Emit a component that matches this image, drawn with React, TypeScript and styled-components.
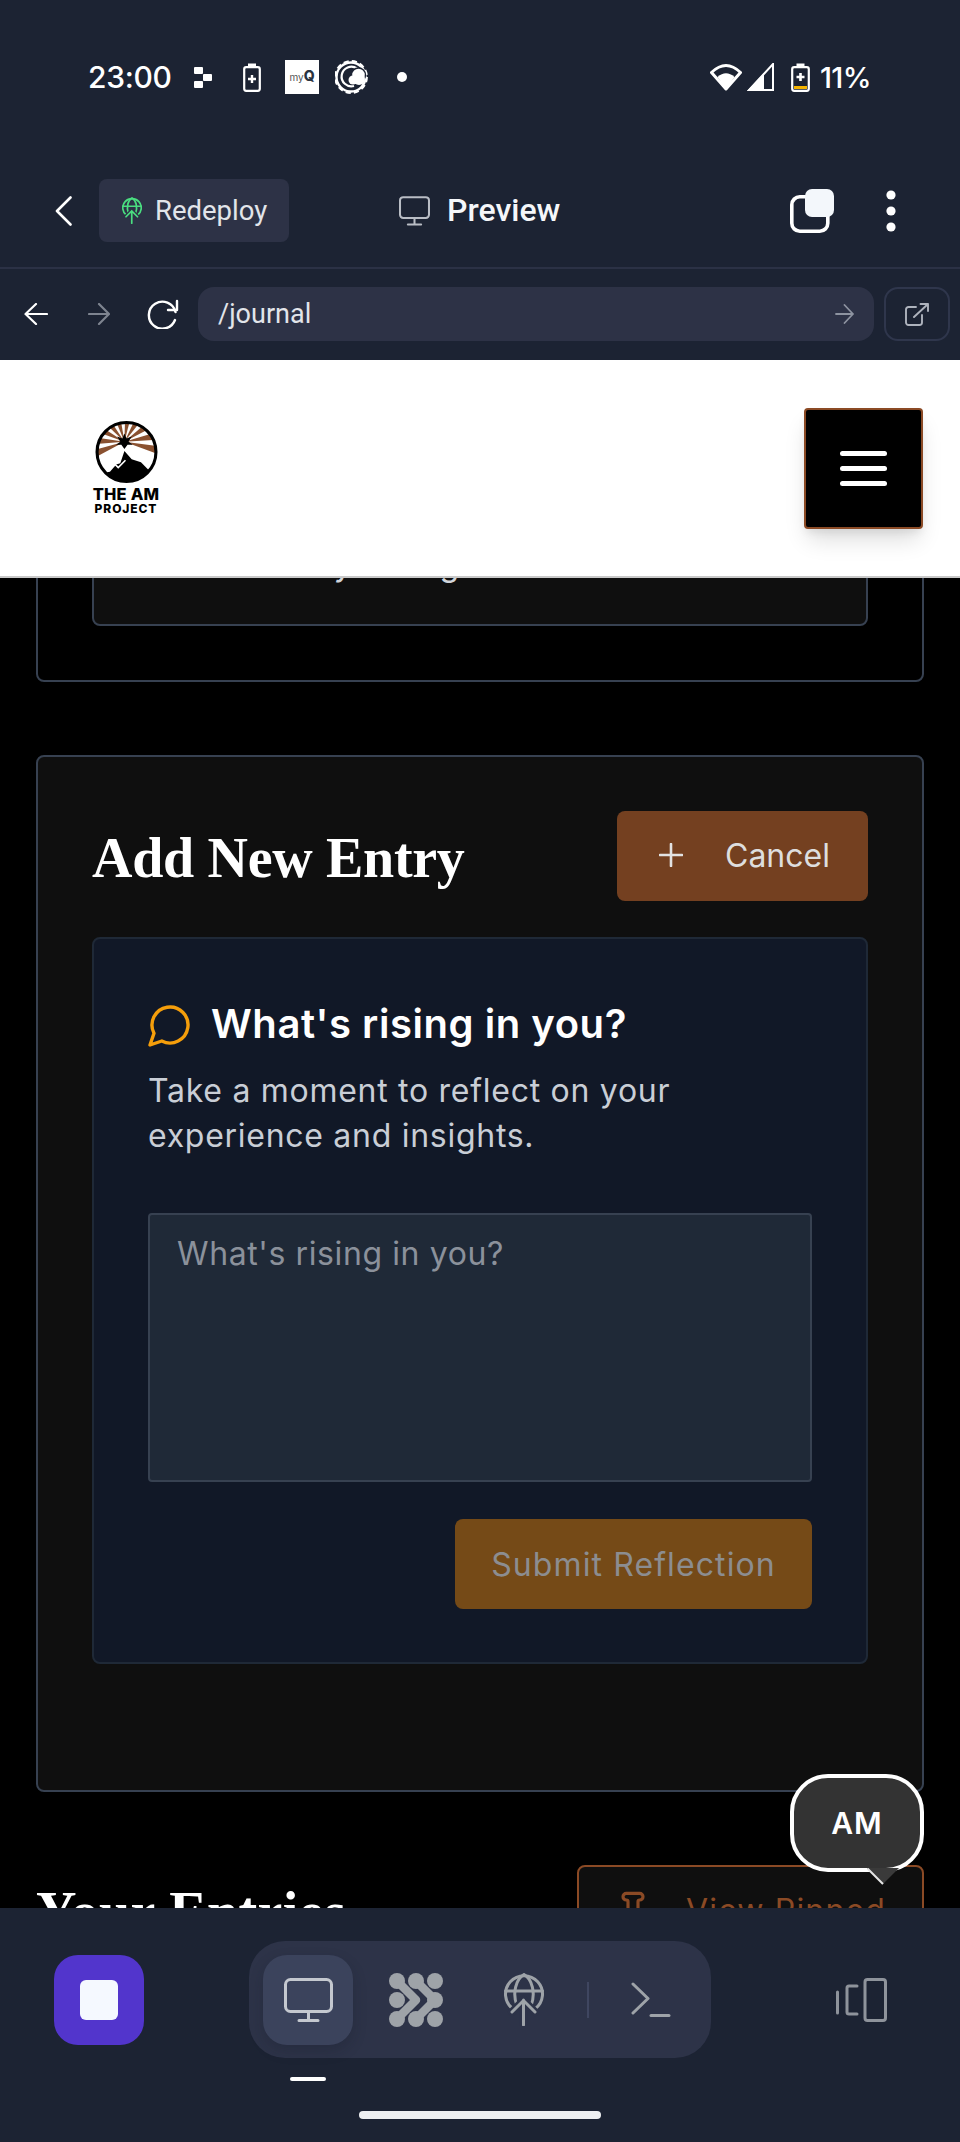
import React from "react";
import styled, { createGlobalStyle } from "styled-components";
import { Pin } from "lucide-react";

const Global = createGlobalStyle`
  html, body { margin: 0; padding: 0; background: #000; }
  * { box-sizing: border-box; }
`;

const SANS = `"Inter", "Liberation Sans", sans-serif`;
const CHROME = `"Roboto", "Liberation Sans", sans-serif`;
const SERIF = `"Liberation Serif", "DejaVu Serif", serif`;

const Screen = styled.div`
  width: 960px;
  height: 2142px;
  display: flex;
  flex-direction: column;
  overflow: hidden;
  background: #000;
  font-family: ${SANS};
`;

const StatusBar = styled.div`
  height: 154px;
  flex: none;
  background: #1c2333;
  display: flex;
  align-items: center;
  padding: 0 89px 0 88px;
  color: #fff;
`;
const StatusTime = styled.span`
  font-size: 30px;
  font-weight: 500;
  width: 83px;
  letter-spacing: -0.3px;
  white-space: nowrap;
`;
const StatusIcon = styled.svg<{ $ml: number }>`
  flex: none;
  display: block;
  margin-left: ${(p) => p.$ml}px;
`;
const MyQ = styled.div`
  width: 34px;
  height: 34px;
  margin-left: 24px;
  background: #fff;
  display: flex;
  align-items: baseline;
  justify-content: center;
  padding-top: 9px;
  line-height: 1;
`;
const MyQLight = styled.span`
  font-size: 10px;
  color: #555;
`;
const MyQBold = styled.span`
  font-size: 14px;
  font-weight: 800;
  color: #2a3340;
`;
const StatusDot = styled.span`
  width: 10px;
  height: 10px;
  border-radius: 50%;
  background: #fff;
  margin-left: 28px;
`;
const StatusSpacer = styled.div`
  flex: 1;
`;
const BatteryText = styled.span`
  margin-left: 10px;
  font-size: 29px;
  font-weight: 500;
  letter-spacing: -0.6px;
  white-space: nowrap;
`;

const AppBar = styled.div`
  height: 115px;
  flex: none;
  background: #1c2333;
  border-bottom: 2px solid #2b3145;
  display: flex;
  align-items: center;
  padding: 0 64px 0 55px;
  font-family: ${CHROME};
`;
const RedeployPill = styled.div`
  margin-left: 27px;
  width: 190px;
  height: 63px;
  border-radius: 8px;
  background: #2d3246;
  display: flex;
  align-items: center;
  padding-left: 23px;
  gap: 13px;
  color: #e2e5ea;
  font-size: 27.5px;
`;
const PreviewLabel = styled.span`
  margin-left: 17px;
  padding-bottom: 2px;
  font-size: 32px;
  font-weight: 500;
  color: #f5f7fa;
`;
const UrlRow = styled.div`
  height: 91px;
  flex: none;
  background: #1c2333;
  display: flex;
  align-items: center;
  padding: 0 10px 1px 24px;
  font-family: ${CHROME};
`;
const UrlField = styled.div`
  margin-left: 19px;
  width: 676px;
  height: 54px;
  border-radius: 16px;
  background: #2d3246;
  display: flex;
  align-items: center;
  justify-content: space-between;
  padding: 0 20px 0 20px;
  color: #e2e5ea;
  font-size: 27px;
`;
const ExternalButton = styled.div`
  margin-left: 10px;
  width: 66px;
  height: 54px;
  border-radius: 14px;
  border: 2px solid #2f364c;
  display: flex;
  align-items: center;
  justify-content: center;
`;

const SiteHeader = styled.header`
  height: 218px;
  flex: none;
  background: #fff;
  border-bottom: 2px solid #c9c9c9;
  display: flex;
  align-items: center;
  justify-content: space-between;
  padding: 0 37px 0 92px;
`;
const LogoBlock = styled.div`
  width: 68px;
  display: flex;
  flex-direction: column;
  align-items: center;
  color: #000;
  font-weight: 800;
  text-align: center;
  line-height: 1;
`;
const LogoTop = styled.span`
  margin-top: 3px;
  font-size: 16.5px;
  letter-spacing: 0.2px;
  white-space: nowrap;
`;
const LogoBottom = styled.span`
  font-size: 12px;
  letter-spacing: 0.9px;
  white-space: nowrap;
`;
const MenuButton = styled.button`
  width: 119px;
  height: 121px;
  padding: 0;
  background: #000;
  border: 2px solid #8b4a25;
  border-radius: 4px;
  box-shadow: 0 14px 22px -4px rgba(0, 0, 0, 0.14), 0 5px 8px -2px rgba(0, 0, 0, 0.08);
  display: flex;
  flex-direction: column;
  align-items: center;
  justify-content: center;
  gap: 10px;
`;
const MenuBar = styled.span`
  width: 47px;
  height: 5px;
  border-radius: 3px;
  background: #fff;
`;

const Viewport = styled.main`
  flex: 1;
  min-height: 0;
  position: relative;
  overflow: hidden;
  padding: 0 36px;
`;
const PriorCard = styled.section`
  margin-top: -40px;
  border: 2px solid #374151;
  border-radius: 8px;
  padding: 0 54px 54px;
`;
const PriorInner = styled.div`
  background: #0f0f0f;
  border: 2px solid #374151;
  border-radius: 8px;
  padding: 0 0 37px 100px;
  font-size: 32px;
  letter-spacing: 0.9px;
  line-height: 45px;
  color: #d1d5db;
  white-space: nowrap;
`;
const EntryCard = styled.section`
  margin-top: 73px;
  height: 1037px;
  background: #0f0f0f;
  border: 2px solid #374151;
  border-radius: 8px;
  padding: 54px;
`;
const EntryHeader = styled.div`
  display: flex;
  align-items: center;
  justify-content: space-between;
  height: 90px;
`;
const SectionTitle = styled.h2<{ $spacing: number }>`
  margin: 0;
  padding-top: 3px;
  font-family: ${SERIF};
  font-size: 56px;
  font-weight: 700;
  letter-spacing: ${(p) => p.$spacing}px;
  color: #fff;
  white-space: nowrap;
`;
const CancelButton = styled.button`
  width: 251px;
  height: 90px;
  border: 0;
  border-radius: 8px;
  background: #744020;
  color: #dedede;
  font-family: ${SANS};
  font-size: 32px;
  display: flex;
  align-items: center;
  padding: 0 0 2px 42px;
  gap: 42px;
`;
const ReflectBox = styled.div`
  margin-top: 36px;
  height: 727px;
  background: #111827;
  border: 2px solid #1f2937;
  border-radius: 8px;
  padding: 54px 54px 53px;
  display: flex;
  flex-direction: column;
`;
const ReflectHeading = styled.div`
  display: flex;
  align-items: center;
  height: 60px;
  color: #fff;
  font-size: 40px;
  font-weight: 600;
  letter-spacing: 0.55px;
  white-space: nowrap;
`;
const ChatIcon = styled.svg`
  flex: none;
  margin: 4px 17px 0 -2px;
`;
const ReflectText = styled.p`
  margin: 15px 0 0;
  font-size: 32px;
  letter-spacing: 0.72px;
  line-height: 45px;
  color: #c9ced6;
`;
const ReflectInput = styled.textarea`
  display: block;
  margin-top: 55px;
  width: 100%;
  height: 269px;
  resize: none;
  background: #1f2937;
  border: 2px solid #374151;
  border-radius: 4px;
  padding: 16px 27px;
  font-family: ${SANS};
  font-size: 32px;
  letter-spacing: 0.6px;
  line-height: 45px;
  color: #fff;
  &::placeholder {
    color: #8b919b;
    opacity: 1;
  }
`;
const SubmitRow = styled.div`
  margin-top: 37px;
  display: flex;
  justify-content: flex-end;
`;
const SubmitButton = styled.button`
  width: 357px;
  height: 90px;
  border: 0;
  border-radius: 8px;
  background: #754a17;
  color: #8c8d90;
  font-family: ${SANS};
  font-size: 32px;
  letter-spacing: 1.1px;
`;
const EntriesRow = styled.div`
  margin-top: 73px;
  display: flex;
  align-items: center;
  justify-content: space-between;
`;
const PinnedButton = styled.button`
  width: 347px;
  height: 90px;
  border: 2px solid #8b4a25;
  border-radius: 8px;
  background: #0f0f0f;
  color: #8b4a25;
  font-family: ${SANS};
  font-size: 32px;
  letter-spacing: 1.15px;
  display: flex;
  align-items: center;
  padding: 0 0 0 34px;
  gap: 33px;
  white-space: nowrap;
`;
const Bubble = styled.div`
  position: absolute;
  left: 790px;
  top: 1196px;
  width: 134px;
  height: 98px;
  border: 4px solid #fff;
  border-radius: 38px;
  background: #333;
  color: #fff;
  font-size: 30px;
  font-weight: 600;
  letter-spacing: 1px;
  display: flex;
  align-items: center;
  justify-content: center;
`;
const BubbleTail = styled.svg`
  position: absolute;
  left: 73px;
  top: 90px;
`;

const BottomBar = styled.footer`
  height: 234px;
  flex: none;
  background: #1c2333;
  padding-top: 33px;
  display: flex;
  flex-direction: column;
`;
const ToolRow = styled.div`
  height: 117px;
  display: flex;
  align-items: center;
  padding-left: 54px;
`;
const StopButton = styled.button`
  width: 90px;
  height: 90px;
  padding: 0;
  border: 0;
  border-radius: 24px;
  background: #5235cc;
  display: flex;
  align-items: center;
  justify-content: center;
`;
const StopSquare = styled.span`
  width: 38px;
  height: 40px;
  border-radius: 6px;
  background: #f5f9ff;
`;
const Segment = styled.div`
  margin-left: 105px;
  width: 462px;
  height: 117px;
  border-radius: 36px;
  background: #2d3348;
  display: flex;
  align-items: center;
  padding: 0 14px;
  gap: 18px;
`;
const SegmentTab = styled.div<{ $active?: boolean }>`
  position: relative;
  width: 90px;
  height: 90px;
  flex: none;
  border-radius: 24px;
  display: flex;
  align-items: center;
  justify-content: center;
  background: ${(p) => (p.$active ? "#3b435c" : "transparent")};
  box-shadow: ${(p) => (p.$active ? "0 6px 14px rgba(20, 24, 38, 0.22)" : "none")};
`;
const SegmentMark = styled.span`
  position: absolute;
  left: 27px;
  top: calc(100% + 32px);
  width: 36px;
  height: 4px;
  border-radius: 2px;
  background: #fff;
`;
const SegmentDivider = styled.span`
  width: 2px;
  height: 36px;
  flex: none;
  margin-right: -1px;
  background: #3f4660;
`;
const DeviceIcon = styled.svg`
  margin-left: 125px;
`;
const HomeBar = styled.div`
  margin: 53px auto 0;
  width: 242px;
  height: 8px;
  border-radius: 4px;
  background: #eef0f2;
`;

const rays = [-112, -88, -64, -40, -16, 8, 32, 56, 80, 104];

const LogoMark = () => (
  <svg width="63" height="62" viewBox="0 0 60 60">
    <defs>
      <clipPath id="logo-disc">
        <circle cx="30" cy="30" r="29" />
      </clipPath>
    </defs>
    <g clipPath="url(#logo-disc)">
      <rect width="60" height="60" fill="#fff" />
      {rays.map((a) => (
        <polygon key={a} points="28,20 23,-24 33,-24" fill="#8a5130" transform={`rotate(${a} 28 20)`} />
      ))}
      <polygon points="28,25 62,58 -6,58" fill="#fff" />
      <polygon points="28,29 35,37 44,40 54,50 60,60 0,60 8,50 14,49 20,42 24,41" fill="#000" />
      <polyline points="10,50 19,42 22,45 29,38" fill="none" stroke="#fff" strokeWidth="1.6" />
      <polygon
        points="28,12 30,17 35,15 32,20 36,23 31,23 28,27 25,23 20,23 24,20 21,15 26,17"
        fill="#000"
      />
    </g>
    <circle cx="30" cy="30" r="28.5" fill="none" stroke="#000" strokeWidth="3" />
  </svg>
);

const GlobeUp = ({ color, w, h, sw, gap }: { color: string; w: number; h: number; sw: number; gap: string }) => (
  <svg width={w} height={h} viewBox="0 0 40 53" fill="none" stroke={color} strokeWidth={sw} strokeLinecap="round">
    <path d="M9 36A18.5 18.5 0 1 1 31 36" />
    <path d="M1.5 18H38.5" />
    <path d="M13 33C8 20 12 6 20 1.5C28 6 32 20 27 33" />
    <path d="M19.5 52V27M8 39L19.5 27.5L31 39" stroke={gap} strokeWidth={sw + 5} />
    <path d="M19.5 52V27M8 39L19.5 27.5L31 39" />
  </svg>
);

const MonitorGlyph = ({ color, w, h, sw }: { color: string; w: number; h: number; sw: number }) => (
  <svg width={w} height={h} viewBox="0 0 49 44" fill="none" stroke={color} strokeWidth={sw} strokeLinecap="round">
    <rect x="1.5" y="1.5" width="46" height="32" rx="5" />
    <path d="M24.5 34V42M15 42.5H34" />
  </svg>
);

export default function App() {
  return (
    <Screen>
      <Global />
      <StatusBar>
        <StatusTime>23:00</StatusTime>
        <StatusIcon $ml={23} width="18" height="21" viewBox="0 0 18 21" fill="#fff">
          <rect x="0" y="0" width="9" height="7" rx="1" />
          <rect x="0" y="14" width="9" height="7" rx="1" />
          <rect x="9" y="7" width="9" height="7" rx="1" />
        </StatusIcon>
        <StatusIcon $ml={31} width="18" height="29" viewBox="0 0 18 29" fill="none" stroke="#fff" strokeWidth="2.2">
          <rect x="1.2" y="4.2" width="15.6" height="23.6" rx="2" />
          <path d="M5 0.5H13V4H5Z" fill="#fff" stroke="none" />
          <path d="M9 12V20M5 16H13" strokeWidth="2.4" />
        </StatusIcon>
        <MyQ>
          <MyQLight>my</MyQLight>
          <MyQBold>Q</MyQBold>
        </MyQ>
        <StatusIcon $ml={16} width="34" height="34" viewBox="0 0 34 34" fill="none" stroke="#fff">
          <circle cx="16" cy="17" r="14.5" strokeWidth="2.4" />
          <circle cx="16" cy="17" r="15.4" strokeWidth="3" strokeDasharray="5 3.1" />
          <path d="M22 8.5A9.8 9.8 0 1 0 19 26" strokeWidth="2.2" />
          <circle cx="23.5" cy="15" r="7" fill="#fff" stroke="#1c2333" strokeWidth="1.4" />
          <circle cx="18" cy="20" r="4.5" fill="#fff" stroke="none" />
          <circle cx="24" cy="19" r="6" fill="#fff" stroke="none" />
        </StatusIcon>
        <StatusDot />
        <StatusSpacer />
        <StatusIcon $ml={0} width="32" height="28" viewBox="0 0 32 28" fill="none">
          <path d="M1.5 9.5Q16 -4.5 30.5 9.5L16 26Z" stroke="#fff" strokeWidth="3" strokeLinejoin="round" />
          <path d="M7.5 14Q16 6.5 24.5 14L16 26Z" fill="#fff" />
        </StatusIcon>
        <StatusIcon $ml={5} width="27" height="28" viewBox="0 0 27 28" fill="none">
          <path d="M26 1V27H2Z" stroke="#fff" strokeWidth="2" />
          <path d="M0 28L17 10V28Z" fill="#fff" />
        </StatusIcon>
        <StatusIcon $ml={17} width="19" height="29" viewBox="0 0 19 29" fill="none" stroke="#fff" strokeWidth="2.2">
          <rect x="1.2" y="4.2" width="16.6" height="23.6" rx="2" />
          <path d="M5.5 0.5H13.5V4H5.5Z" fill="#fff" stroke="none" />
          <path d="M9.5 10V18M5.5 14H13.5" strokeWidth="2.6" />
          <rect x="3" y="23" width="13" height="3" fill="#f5b400" stroke="none" />
        </StatusIcon>
        <BatteryText>11%</BatteryText>
      </StatusBar>

      <AppBar>
        <svg width="17" height="30" viewBox="0 0 17 30" fill="none" stroke="#fff" strokeWidth="2.6" strokeLinecap="round" strokeLinejoin="round">
          <path d="M15.5 1.5L2 15L15.5 28.5" />
        </svg>
        <RedeployPill>
          <GlobeUp color="#4ade80" w={20} h={27} sw={3.4} gap="#2d3246" />
          <span>Redeploy</span>
        </RedeployPill>
        <StatusIcon $ml={110} width="31" height="30" viewBox="0 0 49 47" fill="none" stroke="#b9bdc5" strokeWidth="3.2" strokeLinecap="round">
          <rect x="1.6" y="1.6" width="45.8" height="33" rx="5" />
          <path d="M24.5 35V44M14 45H35" />
        </StatusIcon>
        <PreviewLabel>Preview</PreviewLabel>
        <StatusSpacer />
        <svg width="44" height="44" viewBox="0 0 44 44" fill="none">
          <rect x="1.8" y="7.8" width="36" height="34.4" rx="8" stroke="#fff" strokeWidth="3.6" />
          <rect x="15" y="0" width="29" height="28" rx="7" fill="#f3f7fb" />
        </svg>
        <StatusIcon $ml={52} width="10" height="42" viewBox="0 0 10 42" fill="#fff">
          <circle cx="5" cy="5" r="4.6" />
          <circle cx="5" cy="21" r="4.6" />
          <circle cx="5" cy="37" r="4.6" />
        </StatusIcon>
      </AppBar>

      <UrlRow>
        <svg width="24" height="22" viewBox="0 0 24 22" fill="none" stroke="#fff" strokeWidth="2.2" strokeLinecap="round" strokeLinejoin="round">
          <path d="M23 11H2M12 1L1.5 11L12 21" />
        </svg>
        <StatusIcon $ml={40} width="22" height="22" viewBox="0 0 22 22" fill="none" stroke="#7e8490" strokeWidth="2.2" strokeLinecap="round" strokeLinejoin="round">
          <path d="M1 11H20M11 1L21 11L11 21" />
        </StatusIcon>
        <StatusIcon $ml={36} width="33" height="30" viewBox="0 0 33 30" fill="none" stroke="#fff" strokeWidth="2.4" strokeLinecap="round" strokeLinejoin="round">
          <path d="M29.5 13A13.5 13.5 0 1 0 29 21" />
          <path d="M31 2V11H22" />
        </StatusIcon>
        <UrlField>
          <span>/journal</span>
          <svg width="19" height="20" viewBox="0 0 19 20" fill="none" stroke="#8d93a0" strokeWidth="1.8" strokeLinecap="round" strokeLinejoin="round">
            <path d="M1 10H18M9.5 1L18 10L9.5 19" />
          </svg>
        </UrlField>
        <ExternalButton>
          <svg width="24" height="23" viewBox="0 0 24 23" fill="none" stroke="#aeb3bd" strokeWidth="1.9" strokeLinecap="round" strokeLinejoin="round">
            <path d="M11 4H3.5A2.5 2.5 0 0 0 1 6.5V19.5A2.5 2.5 0 0 0 3.5 22H14.5A2.5 2.5 0 0 0 17 19.5V12" />
            <path d="M9 14L23 1M15.5 1H23V8" />
          </svg>
        </ExternalButton>
      </UrlRow>

      <SiteHeader>
        <LogoBlock>
          <LogoMark />
          <LogoTop>THE AM</LogoTop>
          <LogoBottom>PROJECT</LogoBottom>
        </LogoBlock>
        <MenuButton aria-label="Menu">
          <MenuBar />
          <MenuBar />
          <MenuBar />
        </MenuButton>
      </SiteHeader>

      <Viewport>
        <PriorCard>
          <PriorInner>Your daily sitting</PriorInner>
        </PriorCard>

        <EntryCard>
          <EntryHeader>
            <SectionTitle $spacing={-0.3}>Add New Entry</SectionTitle>
            <CancelButton>
              <svg width="24" height="24" viewBox="0 0 24 24" fill="none" stroke="#e2e2e2" strokeWidth="2.6" strokeLinecap="round">
                <path d="M12 1V23M1 12H23" />
              </svg>
              <span>Cancel</span>
            </CancelButton>
          </EntryHeader>
          <ReflectBox>
            <ReflectHeading>
              <ChatIcon width="48" height="48" viewBox="0 0 24 24" fill="none" stroke="#f59e0b" strokeWidth="1.7" strokeLinejoin="round">
                <path d="M7.9 20A9 9 0 1 0 4 16.1L2 22Z" />
              </ChatIcon>
              What's rising in you?
            </ReflectHeading>
            <ReflectText>Take a moment to reflect on your experience and insights.</ReflectText>
            <ReflectInput placeholder="What's rising in you?" readOnly />
            <SubmitRow>
              <SubmitButton disabled>Submit Reflection</SubmitButton>
            </SubmitRow>
          </ReflectBox>
        </EntryCard>

        <EntriesRow>
          <SectionTitle $spacing={0.4}>Your Entries</SectionTitle>
          <PinnedButton>
            <Pin size={40} strokeWidth={1.9} />
            <span>View Pinned</span>
          </PinnedButton>
        </EntriesRow>

        <Bubble>
          AM
          <BubbleTail width="32" height="18" viewBox="0 0 32 18">
            <polygon points="0,0 32,0 16,16" fill="#3a3a3a" />
            <path d="M0.5 0.5L16 16" stroke="#e6e6e6" strokeWidth="2" fill="none" />
          </BubbleTail>
        </Bubble>
      </Viewport>

      <BottomBar>
        <ToolRow>
          <StopButton aria-label="Stop">
            <StopSquare />
          </StopButton>
          <Segment>
            <SegmentTab $active>
              <MonitorGlyph color="#c4c8cf" w={49} h={44} sw={3} />
              <SegmentMark />
            </SegmentTab>
            <SegmentTab>
              <svg width="54" height="54" viewBox="0 0 54 54" fill="#9ea3a8" stroke="#9ea3a8" strokeLinecap="round" strokeLinejoin="round">
                <circle cx="8" cy="8" r="8" stroke="none" />
                <circle cx="27" cy="8" r="8" stroke="none" />
                <circle cx="46" cy="8" r="8" stroke="none" />
                <circle cx="8" cy="27" r="8" stroke="none" />
                <circle cx="46" cy="27" r="8" stroke="none" />
                <circle cx="8" cy="46" r="8" stroke="none" />
                <circle cx="27" cy="46" r="8" stroke="none" />
                <circle cx="46" cy="46" r="8" stroke="none" />
                <path d="M8 8L27 27L8 46" fill="none" strokeWidth="8.5" />
                <path d="M27 8L46 27L27 46" fill="none" strokeWidth="8.5" />
              </svg>
            </SegmentTab>
            <SegmentTab>
              <GlobeUp color="#9ea3a8" w={40} h={53} sw={3} gap="#2d3348" />
            </SegmentTab>
            <SegmentDivider />
            <SegmentTab>
              <svg width="40" height="36" viewBox="0 0 40 36" fill="none" stroke="#9ea3a8" strokeWidth="3" strokeLinecap="round" strokeLinejoin="round">
                <path d="M2 2L17 16.5L2 31" />
                <path d="M20 33.5H38" />
              </svg>
            </SegmentTab>
          </Segment>
          <DeviceIcon width="51" height="44" viewBox="0 0 51 44" fill="none" stroke="#8e939b" strokeWidth="3" strokeLinecap="round" strokeLinejoin="round">
            <rect x="29" y="1.5" width="20.5" height="41" rx="2.5" />
            <path d="M21 8H13A2 2 0 0 0 11 10V34A2 2 0 0 0 13 36H21" />
            <path d="M1.5 14V35" />
          </DeviceIcon>
        </ToolRow>
        <HomeBar />
      </BottomBar>
    </Screen>
  );
}
